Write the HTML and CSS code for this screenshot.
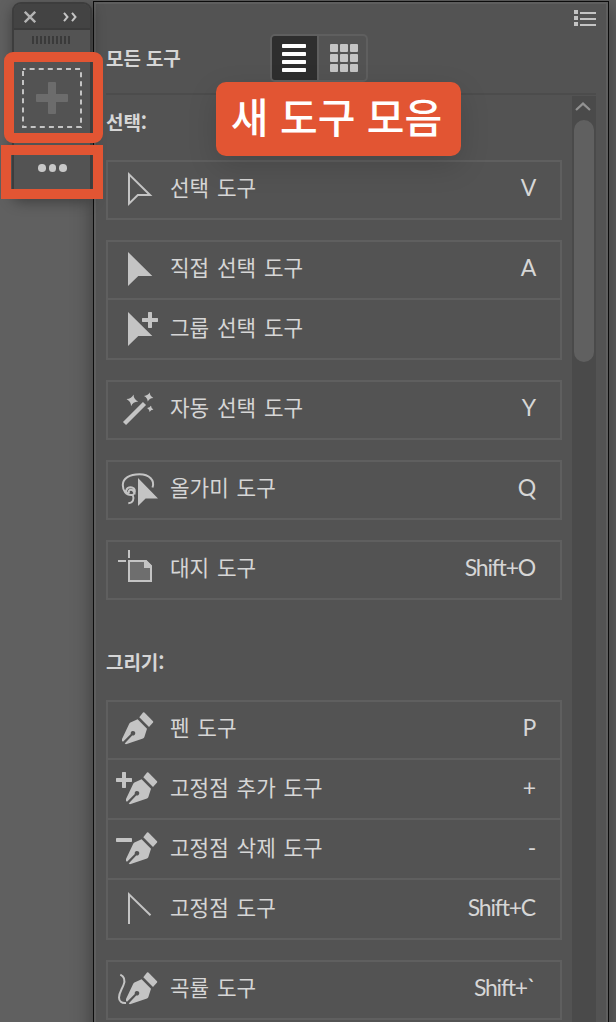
FILE: index.html
```
<!DOCTYPE html>
<html lang="ko">
<head>
    <title>모든 도구</title>
    <meta charset="UTF-8">
    <link rel="stylesheet" href="styles.css">
</head>
<body>
    <svg class="defs" width="0" height="0">
        <symbol id="arrow" viewBox="0 0 56 56">
            <path d="M20 10V44L30.3 34H44.3Z"/>
        </symbol>
        <symbol id="plus" viewBox="0 0 16 16">
            <path d="M6.5 0h3l.5.5V6h5.5l.5.5v3l-.5.5H10v5.5l-.5.5h-3l-.5-.5V10H.5L0 9.5v-3L.5 6H6V.5z"/>
        </symbol>
        <symbol id="star" viewBox="-10 -10 20 20">
            <path transform="rotate(12)" d="M0-10Q1.5-2.5 10 0Q1.5 2.5 0 10Q-1.5 2.5-10 0Q-1.5-2.5 0-10Z"/>
        </symbol>
        <symbol id="pen" viewBox="0 0 56 56">
            <path d="M35 10.6Q35.7 10 36.4 10.6L45 19.2Q45.6 19.9 45 20.6L41 25L31.3 15.3Z"/>
            <path d="M29.6 17.2L39 26.7L36.3 35.3Q35.8 36 35 36.4L18 42.2L16.7 41.6L24.2 33.4A2.3 2.3 0 1 0 22.8 32L15.3 39.6L14 39.2V37L21 22.2Q21.4 21.2 22.4 20.6Z"/>
        </symbol>
    </svg>

    <div class="toolbar">
        <div class="toolbar-head">
            <svg width="12" height="12" viewBox="0 0 12 12"><path class="line close" d="M.8 .8L11.2 11.2M11.2 .8L.8 11.2"/></svg>
            <svg width="14" height="10" viewBox="0 0 14 10"><path class="line" d="M1 .8L4.5 5L1 9.2M9 .8L12.5 5L9 9.2"/></svg>
        </div>
        <div class="grip"></div>
        <svg class="drop" width="60" height="60" viewBox="0 0 60 60">
            <path class="line" stroke-dasharray="5 4.1" stroke-dashoffset="2.5" d="M1 1H59V59H1Z"/>
            <rect class="dim" x="14" y="26" width="32" height="8" rx="1"/>
            <rect class="dim" x="26" y="14" width="8" height="32" rx="1"/>
        </svg>
        <div class="dots"><span></span><span></span><span></span></div>
        <div class="mark mark-drop"></div>
        <div class="mark mark-dots"></div>
    </div>

    <div class="panel">
        <div class="panel-top">
            <svg width="22" height="16" viewBox="0 0 22 16"><path d="M0 0h4v4H0zM0 6h4v4H0zM0 12h4v4H0zM6 2h16v2H6zM6 8h16v2H6zM6 14h16v2H6z"/></svg>
        </div>
        <div class="panel-head">
            <h2>모든 도구</h2>
            <div class="views">
                <button class="view active">
                    <svg width="24" height="28" viewBox="0 0 24 28">
                        <rect width="24" height="4" rx=".7"/><rect y="8" width="24" height="4" rx=".7"/><rect y="16" width="24" height="4" rx=".7"/><rect y="24" width="24" height="4" rx=".7"/>
                    </svg>
                </button>
                <button class="view">
                    <svg width="28" height="28" viewBox="0 0 28 28">
                        <rect width="8" height="8" rx="1"/><rect x="10" width="8" height="8" rx="1"/><rect x="20" width="8" height="8" rx="1"/>
                        <rect y="10" width="8" height="8" rx="1"/><rect x="10" y="10" width="8" height="8" rx="1"/><rect x="20" y="10" width="8" height="8" rx="1"/>
                        <rect y="20" width="8" height="8" rx="1"/><rect x="10" y="20" width="8" height="8" rx="1"/><rect x="20" y="20" width="8" height="8" rx="1"/>
                    </svg>
                </button>
            </div>
            <div class="callout">새 도구 모음</div>
        </div>

        <div class="panel-body">
            <div class="list">
                <h3>선택:</h3>
                <div class="group">
                    <div class="row">
                        <svg class="icon" viewBox="0 0 56 56"><path class="line" d="M21 12.4V41.6L29.8 33H42Z"/></svg>
                        <span class="name">선택 도구</span><span class="key">V</span>
                    </div>
                </div>
                <div class="group">
                    <div class="row">
                        <svg class="icon" viewBox="0 0 56 56"><use href="#arrow"/></svg>
                        <span class="name">직접 선택 도구</span><span class="key">A</span>
                    </div>
                    <div class="row">
                        <svg class="icon" viewBox="0 0 56 56"><use href="#arrow"/><use href="#plus" x="34" y="10" width="16" height="16"/></svg>
                        <span class="name">그룹 선택 도구</span>
                    </div>
                </div>
                <div class="group">
                    <div class="row">
                        <svg class="icon" viewBox="0 0 56 56">
                            <path class="line wand" d="M16.5 41.5L36.5 21.5"/>
                            <use href="#star" x="18.3" y="12.3" width="12" height="12"/>
                            <use href="#star" x="35.9" y="10.2" width="9.6" height="9.6"/>
                            <use href="#star" x="39" y="23.4" width="6.6" height="6.6"/>
                        </svg>
                        <span class="name">자동 선택 도구</span><span class="key">Y</span>
                    </div>
                </div>
                <div class="group">
                    <div class="row">
                        <svg class="icon" viewBox="0 0 56 56">
                            <path class="line" d="M44.5 25.5C47 18.5 41.5 12.3 31.5 12.3C21.5 12.3 14.8 16.5 14.8 23C14.8 28.5 18 33 23 33C28 33 28.3 25.3 22.8 25.3C17.5 25.3 16.5 31.5 20.8 31.8M21 31.3C19.3 27.5 25 25 26.8 32.5M24.8 33C26.5 37.5 25 40.8 20.3 41.2"/>
                            <path d="M30 16V44L37.6 36.6H50Z"/>
                        </svg>
                        <span class="name">올가미 도구</span><span class="key">Q</span>
                    </div>
                </div>
                <div class="group">
                    <div class="row">
                        <svg class="icon" viewBox="0 0 56 56">
                            <path class="line page" d="M21 19H38L43 24V39H21Z"/>
                            <path d="M36 18H38L44 24V26H36ZM20 8h2v8h-2zM10 18h8v2h-8z"/>
                        </svg>
                        <span class="name">대지 도구</span><span class="key">Shift+O</span>
                    </div>
                </div>

                <h3 class="next">그리기:</h3>
                <div class="group">
                    <div class="row">
                        <svg class="icon" viewBox="0 0 56 56"><use href="#pen"/></svg>
                        <span class="name">펜 도구</span><span class="key">P</span>
                    </div>
                    <div class="row">
                        <svg class="icon" viewBox="0 0 56 56"><use href="#pen" x="4" width="56" height="56"/><use href="#plus" x="8" y="10" width="16" height="16"/></svg>
                        <span class="name">고정점 추가 도구</span><span class="key">+</span>
                    </div>
                    <div class="row">
                        <svg class="icon" viewBox="0 0 56 56"><use href="#pen" x="4" width="56" height="56"/><rect x="8" y="16" width="16" height="4" rx=".7"/></svg>
                        <span class="name">고정점 삭제 도구</span><span class="key">-</span>
                    </div>
                    <div class="row">
                        <svg class="icon" viewBox="0 0 56 56"><path class="line" d="M21 42V12.3L42.5 33.3"/></svg>
                        <span class="name">고정점 도구</span><span class="key">Shift+C</span>
                    </div>
                </div>
                <div class="group">
                    <div class="row">
                        <svg class="icon" viewBox="0 0 56 56"><use href="#pen" x="4" width="56" height="56"/><path class="line" d="M12.3 12.7C16 14.5 17.5 18 15.5 23C13.5 28 11 31 11 35.5C11 39 13.5 41.5 18 41"/></svg>
                        <span class="name">곡률 도구</span><span class="key">Shift+`</span>
                    </div>
                </div>
            </div>
            <div class="scroll">
                <svg width="16" height="9" viewBox="0 0 16 9"><path class="line thick" d="M1 8L8 1.6L15 8"/></svg>
                <div class="thumb"></div>
            </div>
        </div>
    </div>
</body>
</html>
```
FILE: styles.css
```
* {
    box-sizing: border-box;
}
body {
    margin: 0;
    height: 1022px;
    overflow: hidden;
    display: flex;
    align-items: flex-start;
    background: #606060;
    color: #d6d6d6;
    font-family: "Noto Sans CJK KR", sans-serif;
}
svg {
    display: block;
    flex: none;
    fill: #c4c4c4;
}
.defs {
    position: absolute;
}
.line {
    fill: none;
    stroke: #c4c4c4;
    stroke-width: 2;
}
.thick {
    stroke-width: 2.2;
}
.close {
    stroke: #b4b4b4;
    stroke-width: 2.4;
}
.wand {
    stroke-width: 4.4;
}
.page {
    fill: #6e6e6e;
}
.dim {
    fill: #6c6c6c;
}

/* small floating toolbar */
.toolbar {
    position: relative;
    width: 80px;
    height: 196px;
    margin: 2px 1px 0 12px;
    border: 2px solid #3d3d3d;
    border-radius: 9px;
    background: #535353;
    box-shadow: 0 4px 14px rgba(0, 0, 0, 0.35);
}
.toolbar-head {
    display: flex;
    justify-content: space-between;
    align-items: center;
    height: 26px;
    padding: 2px 13px 0 10px;
    border-bottom: 2px solid #3b3b3b;
    border-radius: 7px 7px 0 0;
    background: #434343;
}
.grip {
    width: 38px;
    height: 8px;
    margin: 6px 0 24px 18px;
    background: repeating-linear-gradient(to right, #3a3a3a 0 2px, #535353 2px 4px);
}
.drop {
    margin-left: 8px;
}
.dots {
    display: flex;
    gap: 3px;
    margin: 36px 0 0 24px;
}
.dots span {
    width: 7.6px;
    height: 7.6px;
    border-radius: 50%;
    background: #c8c8c8;
}
.mark {
    position: absolute;
    z-index: 2;
    border: 10px solid #e25533;
}
.mark-drop {
    left: -10px;
    top: 48px;
    width: 99px;
    height: 91px;
    border-radius: 9px;
}
.mark-dots {
    left: -13px;
    top: 141px;
    width: 102px;
    height: 54px;
}

/* tool list panel */
.panel {
    width: 516px;
    height: 1040px;
    margin-top: 1px;
    padding: 8px 12px 0;
    border: 1px solid #0c0c0c;
    background: #535353;
    box-shadow: inset 0 0 0 2px #5e5e5e, 0 6px 20px rgba(0, 0, 0, 0.4);
}
.panel-top {
    display: flex;
    justify-content: flex-end;
    height: 24px;
}
.panel-head {
    position: relative;
    display: flex;
    align-items: flex-start;
    height: 61px;
    border-bottom: 2px solid #4c4c4c;
}
h2, h3 {
    margin: 0;
    font-size: 19px;
    font-weight: bold;
    letter-spacing: -0.1px;
}
h2 {
    width: 164px;
    line-height: 48px;
}
.views {
    display: flex;
    height: 48px;
    border: 2px solid #5f5f5f;
    border-radius: 5px;
}
.view {
    display: flex;
    align-items: center;
    justify-content: center;
    width: 47px;
    padding: 0 0 0 3px;
    border: none;
    background: none;
}
.view.active {
    width: 47px;
    padding: 0 1px 0 0;
    border-right: 2px solid #5f5f5f;
    border-radius: 3px 0 0 3px;
    background: #2e2e2e;
}
.view.active svg {
    fill: #ffffff;
}
.callout {
    position: absolute;
    left: 110px;
    top: 48px;
    z-index: 1;
    width: 245px;
    height: 74px;
    padding-right: 4px;
    border-radius: 10px;
    background: #e25533;
    box-shadow: 0 10px 30px rgba(0, 0, 0, 0.14);
    color: #ffffff;
    font-size: 41px;
    font-weight: 500;
    line-height: 67px;
    text-align: center;
}
.panel-body {
    display: flex;
    justify-content: space-between;
}
.list {
    width: 456px;
}
h3 {
    margin-bottom: 11px;
    line-height: 54px;
}
h3.next {
    margin-top: 35px;
}
.group + .group {
    margin-top: 20px;
}
.row {
    display: flex;
    align-items: center;
    height: 60px;
    padding: 2px 25px 0 0;
    border: 2px solid #5f5f5f;
    border-top: none;
}
.row:first-child {
    padding-top: 0;
    border-top: 2px solid #5f5f5f;
}
.icon {
    width: 56px;
    height: 56px;
    overflow: visible;
}
.name {
    margin-left: 6px;
    padding-bottom: 6px;
    font-size: 21.3px;
    line-height: 30px;
    word-spacing: 1.8px;
}
.key {
    margin-left: auto;
    padding-bottom: 6px;
    font-family: Lato, sans-serif;
    font-size: 23px;
    line-height: 30px;
    letter-spacing: -1.2px;
}
.scroll {
    width: 24px;
    height: 940px;
    margin-top: 1px;
    padding: 6px 2px 0;
    background: #4a4a4a;
}
.scroll svg {
    margin-left: 1px;
}
.scroll .line {
    stroke: #929292;
}
.thumb {
    height: 242px;
    margin-top: 9px;
    border-radius: 10px;
    background: #606060;
}
```
